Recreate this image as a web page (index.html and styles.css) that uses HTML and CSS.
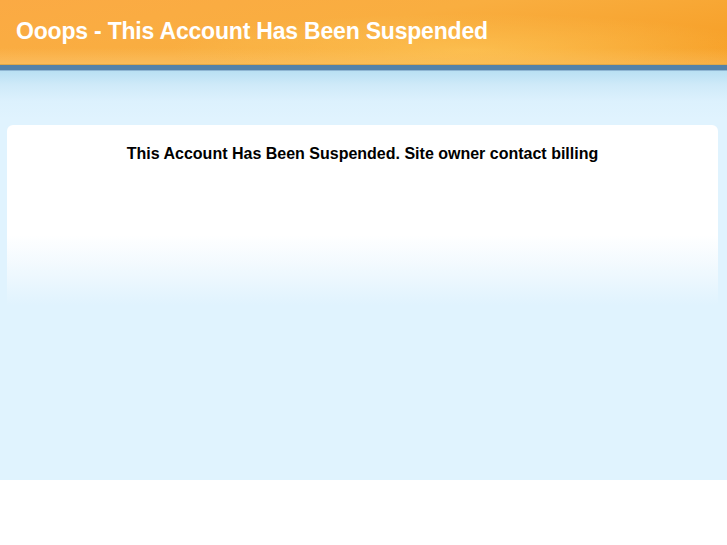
FILE: index.html
```html
<!DOCTYPE html>
<html lang="en">
<head>
    <meta charset="UTF-8">
    <meta name="viewport" content="width=device-width, initial-scale=1.0">
    <title>Account Suspended</title>
    <link rel="stylesheet" href="styles.css">
</head>
<body>

<div class="page">
    <div class="header">
        <h1>Ooops - This Account Has Been Suspended</h1>
    </div>
    <div class="stripe"></div>
    <div class="content">
        <div class="box">
            <h2>This Account Has Been Suspended. Site owner contact billing</h2>
        </div>
    </div>
</div>

</body>
</html>
```

FILE: styles.css
```css
body {
    margin: 0;
    font-family: "Liberation Sans", Arial, sans-serif;
    background-color: #fff;
}
.page {
    height: 480px;
    display: flex;
    flex-direction: column;
}
.header {
    height: 65px;
    box-sizing: border-box;
    padding: 18px 0 0 16px;
    border-bottom: 1px solid #e0a848;
    background:
        radial-gradient(ellipse 300px 36px at 470px 50px, rgba(255, 208, 100, 0.55), rgba(255, 208, 100, 0) 100%),
        linear-gradient(to bottom, rgba(255, 255, 255, 0) 0px, rgba(255, 255, 255, 0) 48px, rgba(255, 230, 170, 0.25) 64px),
        linear-gradient(170deg, #fbaa44 0%, #f9ae40 45%, #f69c22 100%);
}
.header h1 {
    margin: 0;
    font-size: 23px;
    font-weight: bold;
    color: #fff;
    letter-spacing: -0.2px;
}
.stripe {
    height: 5px;
    background-color: #5482a9;
    border-bottom: 1px solid #8fb6d3;
}
.content {
    flex: 1;
    padding: 54px 9px 0 7px;
    background: linear-gradient(to bottom, #b9e0f3 0px, #cfeaf9 14px, #dcf1fd 30px, #e0f3fe 48px, #e0f3fe 100%);
}
.box {
    height: 180px;
    border-radius: 6px 6px 0 0;
    background: linear-gradient(to bottom, #fff 0px, #fff 110px, #eef8fe 150px, #e0f3fe 180px);
    padding-top: 20px;
    box-sizing: border-box;
}
.box h2 {
    margin: 0;
    text-align: center;
    font-size: 16px;
    font-weight: bold;
    color: #000;
}
```
